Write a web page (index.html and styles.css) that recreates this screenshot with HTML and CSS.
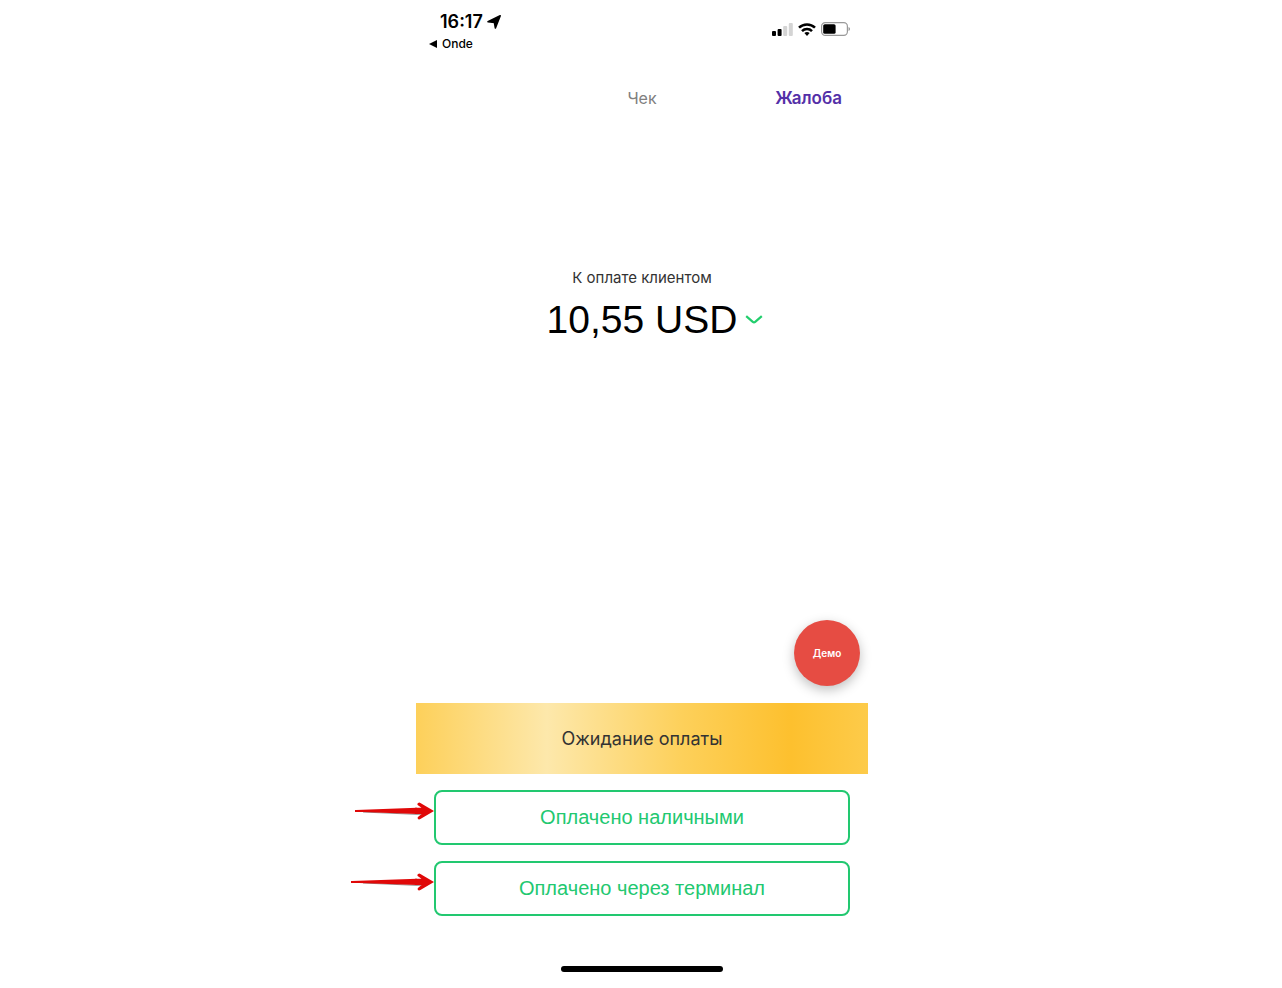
FILE: index.html
```html
<!DOCTYPE html>
<html lang="ru">
<head>
<meta charset="utf-8">
<meta name="viewport" content="width=device-width, initial-scale=1">
<title>Чек</title>
<link rel="stylesheet" href="styles.css">
</head>
<body>
<div class="phone">
  <div class="status">
    <div class="status-left">
      <div class="clock">
        <span>16:17</span>
        <svg width="14" height="14" viewBox="0 0 14 14" aria-hidden="true"><path d="M13.2.8 8.4 13 7.4 7.4 1 6.8Z" fill="#000" stroke="#000" stroke-width="1.6" stroke-linejoin="round"/></svg>
      </div>
      <a class="back-app" href="#"><svg width="8" height="8" viewBox="0 0 8 8" aria-hidden="true"><path d="M8 0v8L0 4Z" fill="#000"/></svg>Onde</a>
    </div>
    <div class="status-right">
      <svg width="21" height="13" viewBox="0 0 21 13" aria-hidden="true"><rect y="8" width="4" height="5" rx="1"/><rect x="5.6" y="6" width="4" height="7" rx="1"/><rect x="11.2" y="3" width="4" height="10" rx="1" fill="#d4d4d4"/><rect x="16.8" width="4" height="13" rx="1" fill="#d4d4d4"/></svg>
      <svg width="18" height="13" viewBox="0 0 18 13" aria-hidden="true"><g fill="none" stroke="#000" stroke-width="2.5"><path d="M1 4.7A11.3 11.3 0 0 1 17 4.7"/><path d="M4 8.1A7 7 0 0 1 14 8.1"/></g><path d="M6.4 10.1a3.8 3.8 0 0 1 5.2 0L9 13Z"/></svg>
      <svg width="29" height="14" viewBox="0 0 29 14" aria-hidden="true"><rect x=".6" y=".6" width="25.8" height="12.8" rx="3.6" fill="#fff" stroke="#999" stroke-width="1.2"/><rect x="2.2" y="2.2" width="12.4" height="9.6" rx="1.6"/><path d="M27.6 5v4q1.2-.6 1.2-2t-1.2-2Z" fill="#777"/></svg>
    </div>
  </div>

  <header class="nav">
    <h1 class="title">Чек</h1>
    <a class="complaint" href="#">Жалоба</a>
  </header>

  <main class="bill">
    <p class="bill-label">К оплате клиентом</p>
    <button class="amount" type="button">10,55 USD<svg class="chevron" width="18" height="10" viewBox="0 0 18 10" aria-hidden="true"><path d="M1.2 1.2 7.8 6.9Q9 7.9 10.2 6.9L16.8 1.2" fill="none" stroke="#22ce6d" stroke-width="2.2"/></svg></button>
  </main>

  <button class="demo" type="button">Демо</button>
  <div class="waiting" role="status">Ожидание оплаты</div>

  <div class="actions">
    <div class="action-row">
      <button class="action" type="button">Оплачено наличными</button>
      <svg class="arrow" width="80" height="18" viewBox="0 0 80 18" aria-hidden="true"><use href="#arrow-shape"/><path d="M0 8h2v2H0Z M1 8.1 62 5.8V12L1 9.8Z" fill="#e00808"/></svg>
    </div>
    <div class="action-row">
      <button class="action" type="button">Оплачено через терминал</button>
      <svg class="arrow" width="84" height="18" viewBox="-4 0 84 18" aria-hidden="true"><use href="#arrow-shape"/><path d="M-4 8h2v2h-2Z M-3 8.1 62 5.8V12L-3 9.8Z" fill="#e00808"/></svg>
    </div>
  </div>
  <div class="home-bar"></div>
</div>

<svg class="defs" width="0" height="0" aria-hidden="true">
  <defs>
    <g id="arrow-shape">
      <path d="M8 10 62 12.4 66 12.2" fill="none" stroke="#777" stroke-width=".8"/>
      <path d="M60 5.8h6.5l-3.2-2.2Q61.5 2 63.2.9q1-.6 2.2.1L79 8.9 65.4 17.1q-1.8.9-2.6-.4-.7-1.4.7-2.3l3-2.3H60Z" fill="#e00808"/>
    </g>
  </defs>
</svg>
</body>
</html>
```

FILE: styles.css
```css
* {
  box-sizing: border-box;
}

body {
  margin: 0;
  padding-left: 2px;
  background: #fff;
  color: #000;
  font-family: Inter, "Liberation Sans", sans-serif;
}

button {
  font: inherit;
  background: none;
  border: 0;
  padding: 0;
  cursor: pointer;
}

a {
  text-decoration: none;
}

svg {
  display: block;
  flex: none;
}

.defs {
  position: absolute;
}

.phone {
  display: flex;
  flex-direction: column;
  max-width: 452px;
  min-height: 100vh;
  margin: 0 auto;
  padding-bottom: 16px;
}

.status {
  display: flex;
  justify-content: space-between;
  align-items: flex-start;
  padding: 12px 18px 0 13px;
}

.clock {
  display: flex;
  align-items: center;
  gap: 4px;
  padding-left: 11px;
  font-size: 18px;
  font-weight: 600;
  line-height: 20px;
}

.back-app {
  display: flex;
  align-items: center;
  gap: 5px;
  margin-top: 4px;
  color: #000;
  font-size: 12px;
  font-weight: 500;
  line-height: 16px;
}

.status-right {
  display: flex;
  align-items: center;
  gap: 5px;
  padding-top: 10px;
}

.nav {
  display: grid;
  grid-template-columns: 1fr auto 1fr;
  align-items: center;
  margin-top: 34px;
  padding: 0 26px;
  line-height: 24px;
}

.title {
  grid-column: 2;
  margin: 0;
  color: #808080;
  font-size: 16px;
  font-weight: 400;
}

.complaint {
  justify-self: end;
  color: #5430a8;
  font-size: 17px;
  font-weight: 600;
}

.bill {
  display: flex;
  flex: 1;
  flex-direction: column;
  align-items: center;
  margin-top: 156px;
}

.bill-label {
  margin: 0;
  color: #333;
  font-size: 15px;
  line-height: 24px;
}

.amount {
  position: relative;
  margin-top: 6px;
  color: #000;
  font-family: "Liberation Sans", Arial, sans-serif;
  font-size: 39px;
  line-height: 48px;
}

.chevron {
  position: absolute;
  top: 19px;
  left: 100%;
  margin-left: 8px;
}

.demo {
  align-self: flex-end;
  width: 66px;
  height: 66px;
  margin: 0 8px 17px 0;
  border-radius: 50%;
  background: #e64c43;
  box-shadow: 0 4px 12px rgba(0, 0, 0, 0.25);
  color: #fff;
  font-size: 10px;
  font-weight: 600;
}

.waiting {
  padding: 22px 16px 21px;
  background: linear-gradient(90deg, #fdd05a 0%, #fde8ab 29%, #fdd05a 59%, #fdc02e 83%, #fdcb4a 100%);
  color: #333;
  font-size: 18px;
  line-height: 28px;
  text-align: center;
}

.actions {
  display: flex;
  flex-direction: column;
  gap: 16px;
  padding: 16px 18px 0;
}

.action-row {
  position: relative;
}

.action {
  width: 100%;
  height: 55px;
  border: 2px solid #22c870;
  border-radius: 8px;
  color: #22c870;
  font-family: "Liberation Sans", Arial, sans-serif;
  font-size: 20px;
}

.arrow {
  position: absolute;
  top: 12px;
  right: 100%;
  margin-right: -1px;
}

.home-bar {
  width: 162px;
  height: 6px;
  margin: 50px auto 0;
  border-radius: 3px;
  background: #000;
}
```
